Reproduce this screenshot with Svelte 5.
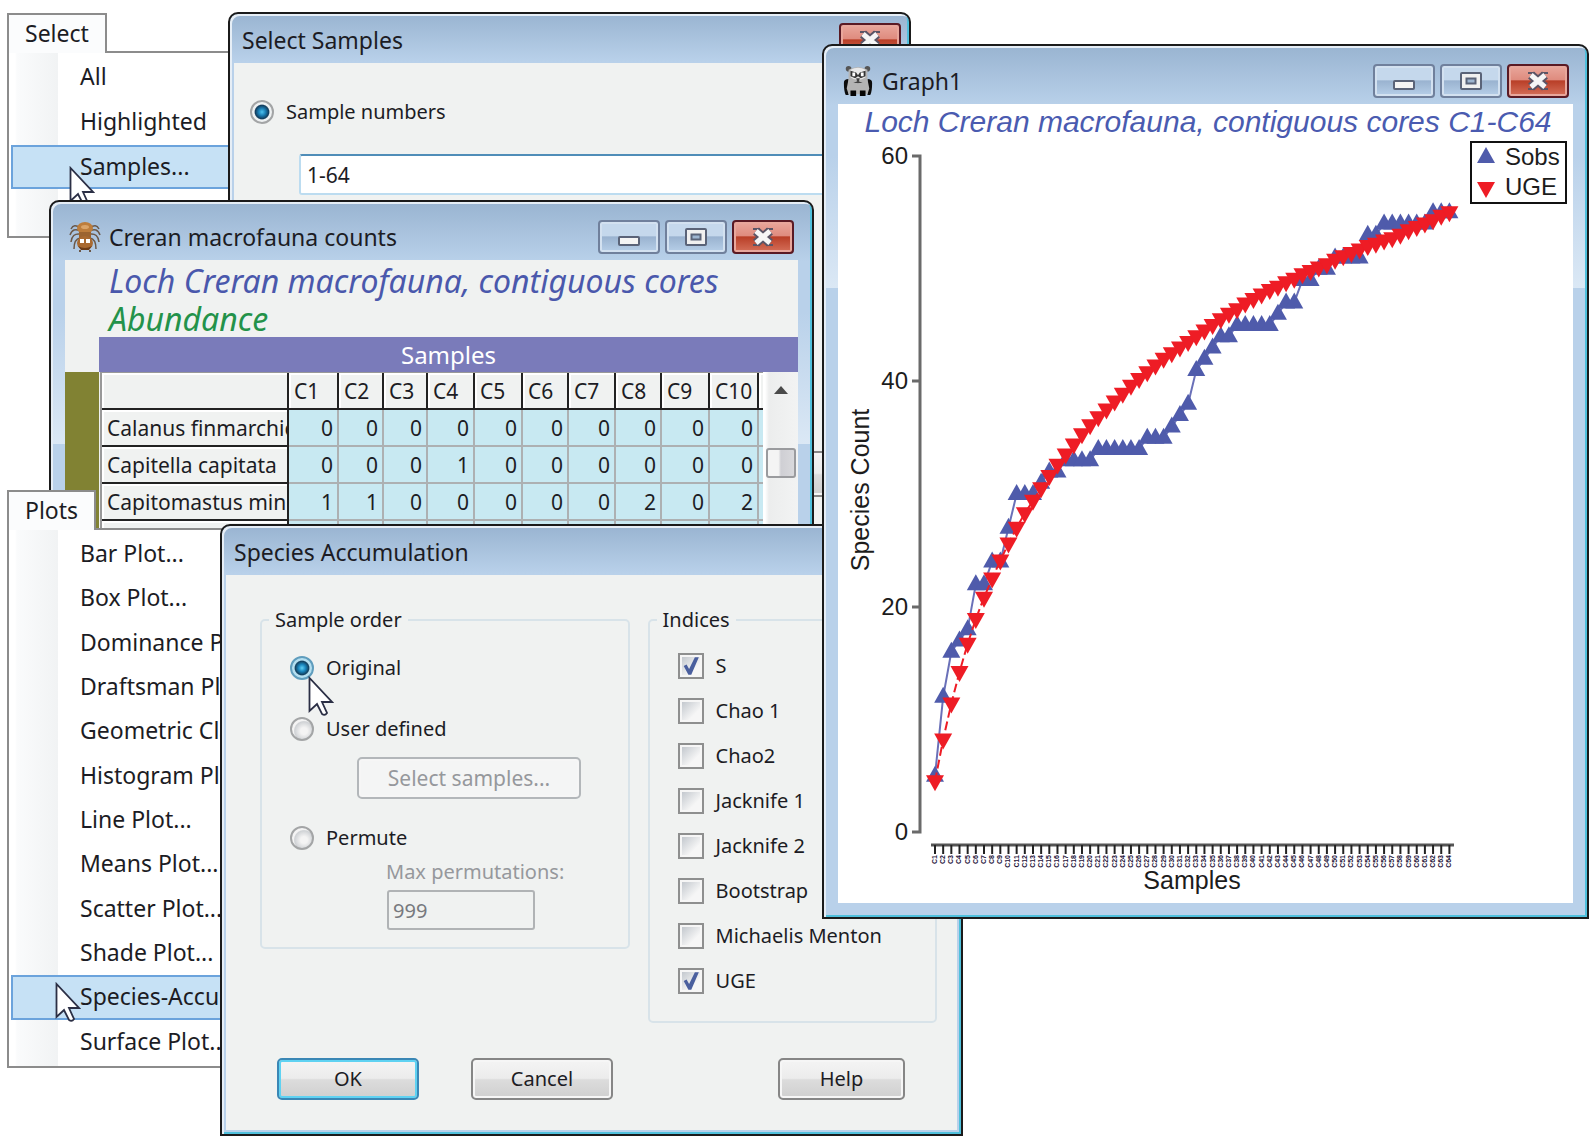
<!--
  App.svelte

  Desktop canvas with the sample selection and species accumulation windows.
  Windows and menus are free-floating; their contents are laid out by flow.
-->
<script lang="ts">
  const selectItems = ['All', 'Highlighted', 'Samples...'];
  const plotItems = [
    'Bar Plot...',
    'Box Plot...',
    'Dominance Plot...',
    'Draftsman Plot...',
    'Geometric Class Plot...',
    'Histogram Plot...',
    'Line Plot...',
    'Means Plot...',
    'Scatter Plot...',
    'Shade Plot...',
    'Species-Accumulation Plot...',
    'Surface Plot...',
  ];

  const columns = ['C1', 'C2', 'C3', 'C4', 'C5', 'C6', 'C7', 'C8', 'C9', 'C10'];
  const colWidths = [187, 50, 45, 44, 47, 48, 46, 47, 46, 48, 49];
  const rows = [
    { name: 'Calanus finmarchicus', counts: [0, 0, 0, 0, 0, 0, 0, 0, 0, 0] },
    { name: 'Capitella capitata', counts: [0, 0, 0, 1, 0, 0, 0, 0, 0, 0] },
    { name: 'Capitomastus minimus', counts: [1, 1, 0, 0, 0, 0, 0, 2, 0, 2] },
    { name: '', counts: ['', '', '', '', '', '', '', '', '', ''] },
  ];

  let sampleNumbers = $state('1-64');
  let order = $state('original');
  let permutations = $state('999');
  let indices = $state([
    { name: 'S', on: true },
    { name: 'Chao 1', on: false },
    { name: 'Chao2', on: false },
    { name: 'Jacknife 1', on: false },
    { name: 'Jacknife 2', on: false },
    { name: 'Bootstrap', on: false },
    { name: 'Michaelis Menton', on: false },
    { name: 'UGE', on: true },
  ]);

  const sobs = [
    5, 12, 16, 17, 18, 22, 22, 24, 24, 27, 30, 30, 30, 31, 32, 32,
    33, 33, 33, 33, 34, 34, 34, 34, 34, 34, 35, 35, 35, 36, 37, 38,
    41, 42, 43, 44, 44, 45, 45, 45, 45, 45, 46, 47, 47, 49, 49, 50,
    50, 51, 51, 51, 51, 53, 53, 54, 54, 54, 54, 54, 54, 55, 55, 55,
  ];
  const uge = [
    4.5, 8.2, 11.4, 14.2, 16.7, 18.9, 20.8, 22.5, 24.1, 25.6, 27, 28.3, 29.4, 30.5, 31.6, 32.6,
    33.5, 34.4, 35.3, 36.1, 36.8, 37.5, 38.2, 38.9, 39.6, 40.2, 40.8, 41.4, 42, 42.5, 43, 43.5,
    44, 44.5, 45, 45.5, 46, 46.4, 46.9, 47.3, 47.7, 48.1, 48.4, 48.8, 49.1, 49.5, 49.8, 50.1,
    50.4, 50.8, 51.1, 51.4, 51.7, 52, 52.2, 52.5, 52.7, 53, 53.4, 53.7, 54, 54.3, 54.7, 55,
  ];

  const px = (i: number) => 97 + i * 8.165;
  const py = (v: number) => 728 - v * 11.267;
  const line = (values: number[]) => values.map((v, i) => `${px(i)},${py(v)}`).join(' ');
  const up = (x: number, y: number) => `M${x} ${y - 10}l9 16h-18z`;
  const down = (x: number, y: number) => `M${x} ${y + 10}l9 -16h-18z`;
</script>

{#snippet cursor(place: string)}
  <svg class="cursor {place}" viewBox="0 0 26 40" aria-hidden="true">
    <path d="M1.500 2v33l7.500-7 5 10q3 2 5-1l-5-11h10z" fill="#fff" stroke="#2b2f45" stroke-width="1.800" />
  </svg>
{/snippet}

{#snippet captionButtons()}
  <div class="caption">
    <button class="cap" aria-label="Minimize">
      <svg viewBox="0 0 62 34"><rect x="21" y="17" width="20" height="8" rx="1" fill="#f4f4f4" stroke="#5a6378" stroke-width="2" /></svg>
    </button>
    <button class="cap" aria-label="Maximize">
      <svg viewBox="0 0 62 34">
        <rect x="21" y="9" width="20" height="16" rx="1" fill="#f0f0f0" stroke="#5a6378" stroke-width="2" />
        <rect x="26.500" y="14.500" width="9" height="5" fill="#9db5d0" stroke="#5a6378" stroke-width="2" />
      </svg>
    </button>
    {@render closeButton()}
  </div>
{/snippet}

{#snippet closeButton()}
  <button class="cap cap--close" aria-label="Close">
    <svg viewBox="0 0 62 34">
      <path d="M24 11L38 23M38 11L24 23" stroke="#5b5566" stroke-width="9" />
      <path d="M21 9h7M34 9h7M21 25h7M34 25h7" stroke="#5b5566" stroke-width="2" />
      <path d="M24 11L38 23M38 11L24 23" stroke="#f6f6f6" stroke-width="5" />
    </svg>
  </button>
{/snippet}

<main class="desktop">
  <!-- Select menu -->
  <nav class="menu menu--select" aria-label="Select">
    <button class="menu__tab">Select</button>
    <div class="menu__list">
      {#each selectItems as item, i}
        <button class="menu__item" class:menu__item--active={i === 2}>{item}</button>
      {/each}
      <span></span>
    </div>
  </nav>
  {@render cursor('cursor--select')}

  <!-- Select Samples dialog -->
  <section class="window window--dialog window--samples">
    <header class="titlebar">
      <h2>Select Samples</h2>
      <div class="caption">{@render closeButton()}</div>
    </header>
    <div class="client samples">
      <label class="choice">
        <input type="radio" name="mode" checked />
        Sample numbers
      </label>
      <input class="samples__range" type="text" aria-label="Sample numbers" bind:value={sampleNumbers} />
      <button class="btn samples__more" aria-label="Apply"></button>
    </div>
  </section>

  <!-- Abundance worksheet -->
  <section class="window window--counts">
    <header class="titlebar">
      <svg class="icon" viewBox="0 0 32 32" aria-hidden="true">
        <g fill="none" stroke="#6b5848" stroke-width="1.500">
          <path d="M11 7Q5 2 2 8M11 10Q4 6 1 14M11 13Q3 12 2 21M11 17Q5 18 5 28" />
          <path d="M21 7Q27 2 30 8M21 10Q28 6 31 14M21 13Q29 12 30 21M21 17Q27 18 27 28" />
        </g>
        <ellipse cx="16" cy="7" rx="8" ry="6" fill="#bd7d3c" />
        <path d="M10 11h12v7H10z" fill="#9c6430" />
        <ellipse cx="16" cy="22" rx="8" ry="7" fill="#a96a31" />
        <ellipse cx="16" cy="6" rx="4" ry="2" fill="#dba468" />
        <path d="M11 18h4v4h-4zM17 18h4v4h-4z" fill="#fff" />
        <path d="M9 25q7 4 14 0l-3 4h-8z" fill="#6d3d18" />
        <path d="M11 29v2M21 29v2" stroke="#6b5848" stroke-width="2" />
      </svg>
      <h2>Creran macrofauna counts</h2>
      {@render captionButtons()}
    </header>
    <div class="client">
      <div class="sheet-head">
        <p class="sheet-title">Loch Creran macrofauna, contiguous cores</p>
        <p class="sheet-title sheet-title--type">Abundance</p>
      </div>
      <div class="sheet-band">Samples</div>
      <div class="sheet">
        <div class="sheet__side"></div>
        <table>
          <colgroup>
            {#each colWidths as w}
              <col style="width: {w}px" />
            {/each}
            <col />
          </colgroup>
          <thead>
            <tr>
              <th></th>
              {#each columns as name}
                <th>{name}</th>
              {/each}
              <th></th>
            </tr>
          </thead>
          <tbody>
            {#each rows as row}
              <tr>
                <th>{row.name}</th>
                {#each row.counts as n}
                  <td>{n}</td>
                {/each}
                <td></td>
              </tr>
            {/each}
          </tbody>
        </table>
        <div class="scroll">
          <span class="scroll__up"></span>
          <span class="scroll__thumb"></span>
        </div>
      </div>
    </div>
  </section>

  <!-- Plots menu -->
  <nav class="menu menu--plots" aria-label="Plots">
    <button class="menu__tab">Plots</button>
    <div class="menu__list">
      {#each plotItems as item, i}
        <button class="menu__item" class:menu__item--active={i === 10}>{item}</button>
      {/each}
    </div>
  </nav>
  {@render cursor('cursor--plots')}

  <!-- Species Accumulation dialog -->
  <section class="window window--dialog window--species">
    <header class="titlebar">
      <h2>Species Accumulation</h2>
    </header>
    <div class="client species">
      <div class="species__groups">
        <fieldset class="order">
          <legend>Sample order</legend>
          <label class="choice">
            <input type="radio" class="hot" value="original" bind:group={order} />
            Original
          </label>
          <label class="choice order__user">
            <input type="radio" value="user" bind:group={order} />
            User defined
          </label>
          <button class="btn order__pick" disabled>Select samples...</button>
          <label class="choice order__permute">
            <input type="radio" value="permute" bind:group={order} />
            Permute
          </label>
          <label class="order__max" for="max-perm">Max permutations:</label>
          <input id="max-perm" class="order__count" type="text" disabled bind:value={permutations} />
        </fieldset>
        <fieldset class="indices">
          <legend>Indices</legend>
          {#each indices as index}
            <label class="choice">
              <input type="checkbox" bind:checked={index.on} />
              {index.name}
            </label>
          {/each}
        </fieldset>
      </div>
      <footer class="species__actions">
        <button class="btn btn--default">OK</button>
        <button class="btn">Cancel</button>
        <button class="btn btn--help">Help</button>
      </footer>
    </div>
  </section>
  {@render cursor('cursor--species')}

  <!-- Accumulation curve -->
  <section class="window window--graph">
    <header class="titlebar">
      <svg class="icon" viewBox="0 0 32 34" aria-hidden="true">
        <circle cx="6" cy="4" r="3" fill="#555" />
        <circle cx="26" cy="4" r="3" fill="#555" />
        <path d="M1 19q0-4 5-4v17H3q-2-4-2-13zM31 19q0-4-5-4v17h3q2-4 2-13z" fill="#0c0c0c" />
        <path d="M6 5q10-6 20 0v10l2 10-2 6H6l-2-6 2-10z" fill="#b4b4b4" />
        <path d="M8 5q8-4 16 0v8q-8 6-16 0z" fill="#e9e9e9" />
        <path d="M8 6l6 2 2 3 2-3 6-2v6l-5 2-3-2-3 2-5-2z" fill="#333" />
        <path d="M10 8h3v4h-3zM19 8h3v4h-3z" fill="#fff" />
        <path d="M14 14h4l-2 6zM11 19l5-2 5 2" fill="#444" />
        <path d="M8 27h6v6H8zM18 27h6v6h-6z" fill="#050505" />
      </svg>
      <h2>Graph1</h2>
      {@render captionButtons()}
    </header>
    <div class="client client--white">
      <svg class="chart" viewBox="0 0 735 799">
        <text class="chart__title" x="370" y="28">Loch Creran macrofauna, contiguous cores C1-C64</text>

        <!-- y axis -->
        <path d="M74 52h8V728h-8M74 277h8M74 503h8" fill="none" stroke="#6a6a6a" stroke-width="3" />
        {#each [0, 20, 40, 60] as tick}
          <text class="chart__tick" x="70" y={py(tick) + 8}>{tick}</text>
        {/each}
        <text class="chart__label" transform="translate(31 386) rotate(-90)">Species Count</text>

        <!-- x axis -->
        <path d="M93 741H616" stroke="#555" stroke-width="3" />
        {#each sobs as _, i}
          <path d="M{px(i)} 741v9" stroke="#222" stroke-width="2" />
          <text class="chart__sample" transform="translate({px(i) + 2} 751) rotate(-90)">C{i + 1}</text>
        {/each}
        <text class="chart__label" x="354" y="785">Samples</text>

        <!-- series -->
        <polyline points={line(sobs)} fill="none" stroke="#6a70b8" stroke-width="2" />
        {#each sobs as v, i}
          <path d={up(px(i), py(v))} fill="#4f5bab" />
        {/each}
        <polyline points={line(uge)} fill="none" stroke="#ee1c25" stroke-width="2" stroke-dasharray="9 4" />
        {#each uge as v, i}
          <path d={down(px(i), py(v))} fill="#ee1c25" />
        {/each}

        <!-- legend -->
        <rect x="633" y="38" width="95" height="61" fill="#fff" stroke="#111" stroke-width="2" />
        <path d={up(648, 53)} fill="#4f5bab" />
        <path d={down(648, 84)} fill="#ee1c25" />
        <text class="chart__tick chart__tick--key" x="667" y="61">Sobs</text>
        <text class="chart__tick chart__tick--key" x="667" y="91">UGE</text>
      </svg>
    </div>
  </section>
</main>

<style>
  :global(body) {
    background: #fff;
  }

  .desktop {
    position: relative;
    min-height: 100vh;
    overflow: hidden;
    font-family: 'Noto Sans', 'Open Sans', sans-serif;
    font-size: 20px;
    line-height: 28px;
    color: #1c1c24;
  }

  button,
  input {
    font: inherit;
    color: inherit;
    margin: 0;
    box-sizing: border-box;
  }

  h2,
  p {
    margin: 0;
    font-weight: 400;
  }

  /* ── Menus ───────────────────────────────────────────────────────────── */
  .menu {
    position: absolute;
    display: flex;
    flex-direction: column;
    align-items: flex-start;
    font-size: 23px;
  }

  .menu--select {
    left: 7px;
    top: 13px;
    width: 240px;
  }

  .menu--plots {
    left: 7px;
    top: 490px;
    width: 230px;
  }

  .menu__tab {
    height: 40px;
    padding: 0 16px 2px;
    border: 2px solid #8c8c8c;
    border-bottom: 0;
    background: #fbfcfd;
    z-index: 1;
  }

  .menu__list {
    display: grid;
    grid-auto-rows: 1fr;
    box-sizing: border-box;
    width: 100%;
    margin-top: -2px;
    padding: 2px;
    border: 2px solid #8c8c8c;
    background: linear-gradient(90deg, #fff 6px, #fafbfc 8px, #f1f3f4 49px, #fff 49px);
  }

  .menu--select .menu__list {
    height: 187px;
  }

  .menu--plots .menu__list {
    height: 540px;
  }

  .menu__item {
    border: 2px solid transparent;
    background: none;
    padding: 0 0 2px 67px;
    text-align: left;
    white-space: nowrap;
    overflow: hidden;
  }

  .menu__item--active {
    border-color: #6ba3dc;
    background: #c6e1f5;
  }

  /* ── Cursors ─────────────────────────────────────────────────────────── */
  .cursor {
    position: absolute;
    width: 26px;
    height: 40px;
  }

  .cursor--select { left: 69px; top: 166px; }
  .cursor--plots { left: 55px; top: 982px; }
  .cursor--species { left: 308px; top: 676px; }

  /* ── Window frames ───────────────────────────────────────────────────── */
  .window {
    position: absolute;
    box-sizing: border-box;
    display: flex;
    flex-direction: column;
    padding: 0 14px 14px;
    border: 2px solid #1b1b1b;
    border-radius: 10px 10px 0 0;
    background: linear-gradient(#99b4d1, #b9d1ea 60px, #b9d1ea 110px, #dbe8f5 242px, #b9d1ea 242px);
    box-shadow: inset 2px 2px 0 #e6eef6, inset -2px -2px 0 #4fc0dc;
  }

  .window--dialog {
    padding: 0 4px 4px;
    background: linear-gradient(#99b4d1, #b9d1ea 48px);
  }

  .window--samples { left: 228px; top: 12px; width: 683px; height: 580px; }
  .window--counts { left: 49px; top: 200px; width: 765px; height: 400px; }
  .window--species { left: 220px; top: 524px; width: 743px; }
  .window--graph { left: 822px; top: 44px; width: 767px; }

  .titlebar {
    box-sizing: border-box;
    display: flex;
    align-items: center;
    gap: 8px;
    flex: none;
    height: 58px;
    padding: 12px 4px 0;
  }

  .window--dialog .titlebar {
    height: 49px;
    padding: 2px 4px 0 8px;
  }

  .titlebar h2 {
    flex: 1;
    font-size: 23px;
  }

  .icon {
    width: 32px;
    height: 32px;
  }

  .caption {
    display: flex;
    gap: 5px;
  }

  .cap {
    width: 62px;
    height: 34px;
    padding: 0;
    border: 2px solid #70809c;
    border-radius: 4px;
    background: linear-gradient(#c5d8ec 45%, #9ab3d0 50%, #b7cfe8);
    box-shadow: inset 0 0 0 2px #d3e1f0;
  }

  .cap svg {
    display: block;
    width: 62px;
    height: 34px;
    margin: -2px;
  }

  .cap--close {
    border-color: #5a1a24;
    background: linear-gradient(#e9a79c, #df8c7f 45%, #b93f28 50%, #d5705a);
    box-shadow: inset 0 0 0 2px #e8a79c;
  }

  .client {
    flex: 1;
    min-height: 0;
    overflow: hidden;
    background: #f0f2f1;
  }

  .client--white {
    background: #fff;
  }

  /* ── Form controls ───────────────────────────────────────────────────── */
  .choice {
    display: flex;
    align-items: center;
    gap: 12px;
    height: 28px;
  }

  input[type='radio'] {
    appearance: none;
    width: 24px;
    height: 24px;
    border: 2px solid #a3a5a6;
    border-radius: 50%;
    background: radial-gradient(circle at 60% 60%, #f4f4f4 20%, #cfd2d5 55%, #f4f4f4 62%);
  }

  input[type='radio']:checked {
    background: radial-gradient(circle at 50% 50%, #4fc3ef 0, #1b7fb5 25%, #123c5c 48%, #eef1f2 56%);
  }

  input[type='radio'].hot:checked {
    border-color: #5f9dbd;
    background: radial-gradient(circle at 50% 50%, #5fd0f5 0, #1b86bd 25%, #12405f 48%, #b5dff0 56%);
  }

  input[type='checkbox'] {
    appearance: none;
    width: 26px;
    height: 26px;
    padding: 2px;
    border: 2px solid #8e8f8f;
    background: linear-gradient(135deg, #c3c8ce, #f6f6f6 70%) content-box, #f6f6f6;
  }

  input[type='checkbox']::before {
    content: '';
    display: block;
    width: 18px;
    height: 18px;
  }

  input[type='checkbox']:checked::before {
    background: #4a5f9e;
    clip-path: polygon(12% 50%, 28% 42%, 42% 66%, 74% 2%, 96% 2%, 54% 98%, 38% 98%);
  }

  .btn {
    width: 142px;
    height: 42px;
    border: 2px solid #868686;
    border-radius: 5px;
    background: linear-gradient(#f4f4f4 0%, #ececec 48%, #dcdcdc 52%, #cfcfcf);
    box-shadow: inset 0 0 0 2px #f6f6f6;
  }

  .btn--default {
    border-color: #3a87b5;
    box-shadow: inset 0 0 0 2px #5fd2f2;
  }

  .btn:disabled {
    border-color: #b3b7ba;
    background: #f4f5f5;
    color: #96989c;
    font-size: 21px;
  }

  /* ── Select Samples ──────────────────────────────────────────────────── */
  .samples {
    display: flex;
    flex-direction: column;
    padding: 35px 0 0 16px;
  }

  .samples__range {
    margin: 28px 12px 0 49px;
    height: 41px;
    padding: 0 6px;
    border: 2px solid #bcdcf0;
    border-top-color: #4f8db8;
    border-radius: 3px;
    background: #fff;
    font-size: 21px;
  }

  .samples__more {
    align-self: flex-end;
    height: 46px;
    margin: 256px 12px 0 0;
  }

  /* ── Worksheet ───────────────────────────────────────────────────────── */
  .window--counts .client {
    display: flex;
    flex-direction: column;
  }

  .sheet-head {
    box-sizing: border-box;
    flex: none;
    height: 77px;
    padding: 2px 0 0 44px;
  }

  .sheet-title {
    font-size: 32px;
    font-style: italic;
    line-height: 38px;
    color: #4a58ac;
    white-space: nowrap;
  }

  .sheet-title--type {
    color: #23924a;
  }

  .sheet-band {
    height: 35px;
    margin-left: 34px;
    background: #7a7bba;
    color: #fff;
    font-size: 24px;
    line-height: 35px;
    text-align: center;
  }

  .sheet {
    flex: 1;
    display: flex;
  }

  .sheet__side {
    width: 34px;
    background: #818233;
  }

  table {
    flex: 1;
    width: 0;
    margin-left: 1px;
    table-layout: fixed;
    border-collapse: separate;
    border-spacing: 0;
    border-top: 1px solid #999;
    border-left: 2px solid #999;
    align-self: flex-start;
    font-size: 21px;
  }

  th,
  td {
    box-sizing: border-box;
    height: 37px;
    padding: 0 4px;
    overflow: hidden;
    white-space: nowrap;
    line-height: 28px;
  }

  th {
    padding: 0 0 0 5px;
    border-right: 2px solid #222;
    border-bottom: 2px solid #222;
    background: #f0f2f1;
    box-shadow: inset 2px 2px 0 #fff;
    font-weight: 400;
    text-align: left;
  }

  td {
    border-right: 2px solid #adb0b2;
    border-bottom: 2px solid #adb0b2;
    background: #c8e9f2;
    text-align: right;
  }

  th:last-child,
  td:last-child {
    padding: 0;
    border-right: 0;
  }

  .scroll {
    display: flex;
    flex-direction: column;
    align-items: center;
    width: 35px;
    padding-top: 14px;
    background: linear-gradient(90deg, #fff 2px, #eceded 6px, #f2f3f3);
    box-sizing: border-box;
  }

  .scroll__up {
    border: 7px solid transparent;
    border-top: 0;
    border-bottom: 8px solid #4a4a4a;
  }

  .scroll__thumb {
    box-sizing: border-box;
    width: 30px;
    height: 30px;
    margin-top: 54px;
    border: 2px solid #9a9b9e;
    border-radius: 3px;
    background: linear-gradient(90deg, #f4f4f4 40%, #cfcfd4 50%, #d9d9dc);
  }

  /* ── Species Accumulation ────────────────────────────────────────────── */
  .species {
    padding: 31px 20px 30px 34px;
  }

  .species__groups {
    display: grid;
    grid-template-columns: 369fr 289fr;
    gap: 18px;
    align-items: start;
  }

  fieldset {
    display: flex;
    flex-direction: column;
    min-width: 0;
    margin: 0;
    border: 2px solid #d8e3e9;
    border-radius: 5px;
  }

  legend {
    padding: 0 6px;
    margin-left: -21px;
  }

  .order {
    padding: 20px 28px 17px;
  }

  .order__user {
    margin-top: 33px;
  }

  .order__pick {
    width: 224px;
    margin: 14px 0 0 67px;
  }

  .order__permute {
    margin-top: 25px;
  }

  .order__max {
    margin: 6px 0 0 96px;
    color: #96989c;
  }

  .order__count {
    width: 148px;
    height: 40px;
    margin: 4px 0 0 97px;
    padding: 0 4px;
    border: 2px solid #b0b3b5;
    border-radius: 3px;
    background: #f0f2f1;
    color: #77797e;
  }

  .indices {
    gap: 17px;
    padding: 18px 28px 26px;
  }

  .species__actions {
    display: flex;
    gap: 52px;
    padding: 35px 32px 0 17px;
  }

  .btn--help {
    width: 127px;
    margin-left: auto;
  }

  /* ── Chart ───────────────────────────────────────────────────────────── */
  .chart {
    display: block;
    width: 100%;
    height: auto;
    font-family: 'Liberation Sans', Arial, sans-serif;
    font-size: 25px;
    fill: #1c1c1c;
  }

  .chart__title {
    font-size: 30px;
    font-style: italic;
    text-anchor: middle;
    fill: #4a5bb0;
  }

  .chart__label {
    text-anchor: middle;
  }

  .chart__tick {
    font-size: 24px;
    text-anchor: end;
  }

  .chart__tick--key {
    text-anchor: start;
  }

  .chart__sample {
    font-size: 7px;
    font-weight: 700;
    text-anchor: end;
    fill: #1d1238;
  }
</style>
